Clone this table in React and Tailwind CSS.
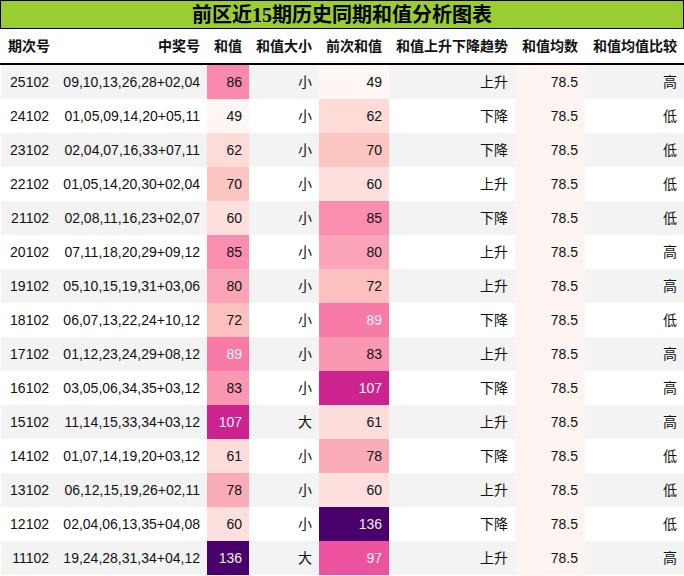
import React from "react";

const rows = [
  ["25102", "09,10,13,26,28+02,04", 86, "小", 49, "上升", "高"],
  ["24102", "01,05,09,14,20+05,11", 49, "小", 62, "下降", "低"],
  ["23102", "02,04,07,16,33+07,11", 62, "小", 70, "下降", "低"],
  ["22102", "01,05,14,20,30+02,04", 70, "小", 60, "上升", "低"],
  ["21102", "02,08,11,16,23+02,07", 60, "小", 85, "下降", "低"],
  ["20102", "07,11,18,20,29+09,12", 85, "小", 80, "上升", "高"],
  ["19102", "05,10,15,19,31+03,06", 80, "小", 72, "上升", "高"],
  ["18102", "06,07,13,22,24+10,12", 72, "小", 89, "下降", "低"],
  ["17102", "01,12,23,24,29+08,12", 89, "小", 83, "上升", "高"],
  ["16102", "03,05,06,34,35+03,12", 83, "小", 107, "下降", "高"],
  ["15102", "11,14,15,33,34+03,12", 107, "大", 61, "上升", "高"],
  ["14102", "01,07,14,19,20+03,12", 61, "小", 78, "下降", "低"],
  ["13102", "06,12,15,19,26+02,11", 78, "小", 60, "上升", "低"],
  ["12102", "02,04,06,13,35+04,08", 60, "小", 136, "下降", "低"],
  ["11102", "19,24,28,31,34+04,12", 136, "大", 97, "上升", "高"],
];

const stops = [
  [255, 247, 243],
  [253, 224, 221],
  [252, 197, 192],
  [250, 159, 181],
  [247, 104, 161],
  [221, 52, 151],
  [174, 1, 126],
  [122, 1, 119],
  [73, 0, 106],
];

function cmap(v) {
  const t = Math.max(0, Math.min(1, (v - 49) / (136 - 49)));
  const p = t * 8;
  const i = Math.min(7, Math.floor(p));
  const f = p - i;
  const a = stops[i];
  const b = stops[i + 1];
  const c = a.map((x, k) => Math.round(x + (b[k] - x) * f));
  const lum = (0.2126 * c[0] + 0.7152 * c[1] + 0.0722 * c[2]) / 255;
  return { bg: `rgb(${c[0]},${c[1]},${c[2]})`, dark: t >= 0.45 };
}

const cols = "grid grid-cols-[55px_151px_42px_70px_70px_126px_70px_99px]";

function HeatCell({ v }) {
  const c = cmap(v);
  return (
    <div
      className={`flex items-center justify-end pr-[7px] ${c.dark ? "text-[#f1f1f1]" : "text-[#111]"}`}
      style={{ backgroundColor: c.bg }}
    >
      {v}
    </div>
  );
}

export default function App() {
  return (
    <div
      className="w-[684px] h-[576px] bg-white overflow-hidden text-[14px] text-[#111]"
      style={{ fontFamily: '"Liberation Sans", "Noto Sans CJK SC", sans-serif' }}
    >
      <div
        className="h-[29px] border border-black bg-[#9acd32] flex items-center justify-center text-[20px] font-bold text-black"
        style={{ fontFamily: '"Liberation Serif", "Noto Sans CJK SC", serif' }}
      >
        前区近15期历史同期和值分析图表
      </div>
      <div className={`${cols} h-[36px] border-b-2 border-black font-bold pl-px`}>
        <div className="flex items-center pl-[7px]">期次号</div>
        <div className="flex items-center justify-end pr-[7px]">中奖号</div>
        <div className="flex items-center justify-end pr-[7px]">和值</div>
        <div className="flex items-center justify-end pr-[7px]">和值大小</div>
        <div className="flex items-center justify-end pr-[7px]">前次和值</div>
        <div className="flex items-center justify-end pr-[7px]">和值上升下降趋势</div>
        <div className="flex items-center justify-end pr-[7px]">和值均数</div>
        <div className="flex items-center justify-end pr-[7px]">和值均值比较</div>
      </div>
      <div className="pl-px">
        {rows.map((r, i) => (
          <div
            key={r[0]}
            className={`${cols} h-[34px] ${i % 2 === 0 ? "bg-[#f3f3f3]" : "bg-white"}`}
          >
            <div className="flex items-center justify-end pr-[7px]">{r[0]}</div>
            <div className="flex items-center justify-end pr-[7px]">{r[1]}</div>
            <HeatCell v={r[2]} />
            <div className="flex items-center justify-end pr-[7px]">{r[3]}</div>
            <HeatCell v={r[4]} />
            <div className="flex items-center justify-end pr-[7px]">{r[5]}</div>
            <div className="flex items-center justify-end pr-[7px] bg-[#fef4f2]">78.5</div>
            <div className="flex items-center justify-end pr-[7px]">{r[6]}</div>
          </div>
        ))}
      </div>
    </div>
  );
}
